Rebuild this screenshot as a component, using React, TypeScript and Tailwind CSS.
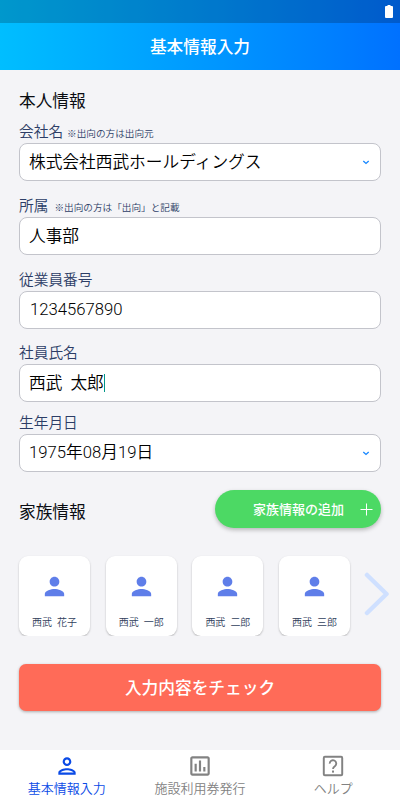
import { useState } from "react";
import type { ReactNode } from "react";
import { MdAssessment, MdOutlineAssessment, MdOutlinePerson, MdPerson } from "react-icons/md";

type FieldProps = {
  label: string;
  note?: string;
  noteClass?: string;
  className?: string;
  children: ReactNode;
};

const family = ["花子", "一郎", "二郎", "三郎"];

function Field({ label, note, noteClass = "ml-1", className = "", children }: FieldProps) {
  return (
    <div className={className}>
      <div className="flex h-[22px] items-baseline whitespace-nowrap text-[#2c3d66]">
        <span className="text-[14.7px] leading-[22px] font-[350]">{label}</span>
        {note && <span className={`text-[9.65px] leading-none font-[350] ${noteClass}`}>{note}</span>}
      </div>
      <div className="flex h-[38px] items-center justify-between rounded-[8px] border border-[#c3c4cb] bg-white pr-[10px] pl-[9px] text-[16.7px] font-[350] whitespace-nowrap text-black">
        {children}
      </div>
    </div>
  );
}

function SelectArrow() {
  return (
    <svg className="h-[6px] w-[8px]" viewBox="0 0 8 6" fill="none">
      <path d="M1.3 1.9L4 4.4L6.7 1.9" stroke="#1687ff" strokeWidth="1.3" />
    </svg>
  );
}

function FamilyCard({ name }: { name: string }) {
  return (
    <div className="flex h-[80px] w-[71px] shrink-0 flex-col items-center rounded-[9px] bg-white pt-[16px] shadow-[0_1px_2px_rgba(0,0,0,0.25)]">
      <MdPerson className="h-[29px] w-[29px] text-[#5f7ee9]" />
      <div className="mt-[14px] flex gap-[5px] text-[10px] leading-[15px] font-[350] text-[#30405c]">
        <span>西武</span>
        <span>{name}</span>
      </div>
    </div>
  );
}

function HelpIcon() {
  return (
    <svg className="h-[26px] w-[26px]" viewBox="0 0 24 24" fill="none" stroke="currentColor">
      <rect x="3.5" y="3.5" width="17" height="17" rx="1" strokeWidth="1.8" />
      <path d="M9 9.8a3 3 0 1 1 4.900 2.200c-1.100 .8-1.900 1.400-1.900 2.700" strokeWidth="1.700" />
      <path d="M12 16.200v1.900" strokeWidth="1.900" />
    </svg>
  );
}

export default function App() {
  const [tab, setTab] = useState("info");

  const tabs = [
    { id: "info", label: "基本情報入力", icon: <MdOutlinePerson className="h-[26px] w-[26px]" /> },
    {
      id: "ticket",
      label: "施設利用券発行",
      icon:
        tab === "ticket" ? (
          <MdAssessment className="h-[26px] w-[26px]" />
        ) : (
          <MdOutlineAssessment className="h-[26px] w-[26px]" />
        ),
    },
    { id: "help", label: "ヘルプ", icon: <HelpIcon /> },
  ];

  return (
    <div className="flex h-[800px] w-[400px] flex-col overflow-hidden bg-[#f4f4f7] font-[Roboto,'Noto_Sans_CJK_JP',sans-serif]">
      <header className="h-[70px] shrink-0 bg-linear-to-r from-[#00beff] to-[#0071ff] text-white">
        <div className="flex h-[23px] justify-end bg-black/20 pt-[5px] pr-[7px]">
          <svg className="h-[13px] w-[8px]" viewBox="0 0 8 13" fill="#fff">
            <path d="M2.500 0h3v1h1.500q1 0 1 1v10q0 1-1 1h-6q-1 0-1-1v-10q0-1 1-1h1.500z" />
          </svg>
        </div>
        <h1 className="flex h-[47px] items-center justify-center pt-[2px] text-[16.7px] font-medium">基本情報入力</h1>
      </header>

      <main className="flex-1 px-[19px] pt-[20px]">
        <h2 className="text-[16.7px] leading-[24px] text-[#0a0c12]">本人情報</h2>

        <Field label="会社名" note="※出向の方は出向元" className="mt-[7px]">
          <span className="pt-[2px]">株式会社西武ホールディングス</span>
          <SelectArrow />
        </Field>
        <Field label="所属" note="※出向の方は「出向」と記載" noteClass="ml-[6px]" className="mt-[14px]">
          <span className="pt-[2px]">人事部</span>
        </Field>
        <Field label="従業員番号" className="mt-[14px]">
          <span className="pl-px">1234567890</span>
        </Field>
        <Field label="社員氏名" className="mt-[13px]">
          <div className="flex items-center">
            <span className="pt-[2px]">西武</span>
            <span className="ml-[8px] pt-[2px]">太郎</span>
            <span className="h-[18px] w-[1.5px] bg-[#009688]" />
          </div>
        </Field>
        <Field label="生年月日" className="mt-[10px]">
          <span>1975年08月19日</span>
          <SelectArrow />
        </Field>

        <div className="mt-[18px] flex h-[38px] items-center justify-between">
          <h2 className="pt-[7px] text-[16.7px] text-[#0a0c12]">家族情報</h2>
          <button className="flex h-[38px] w-[166px] items-center justify-end rounded-full bg-[#4cd964] pr-[8px] text-white shadow-[0_2px_4px_rgba(0,0,0,0.25)]">
            <span className="pt-[2px] text-[13px] font-medium">家族情報の追加</span>
            <svg className="ml-[16px] h-[13px] w-[13px]" viewBox="0 0 13 13" stroke="#fff">
              <path d="M6.500 0.500v12M0.500 6.500h12" />
            </svg>
          </button>
        </div>

        <div className="-mr-[8px] -ml-[3px] mt-[24px] flex h-[84px] items-start gap-[15.700px] overflow-hidden pt-[4px] pl-[3px]">
          {family.map((name) => (
            <FamilyCard key={name} name={name} />
          ))}
          <svg className="mt-[14px] -ml-[2px] h-[48px] w-[27px] shrink-0" viewBox="0 0 27 48" fill="none">
            <path d="M3 5L22.500 24L3 43" stroke="#cfe0ff" strokeWidth="4.500" strokeLinecap="round" strokeLinejoin="round" />
          </svg>
        </div>

        <button className="mt-[28px] h-[47px] w-full rounded-[7px] bg-[#ff6b58] pt-[2px] text-[16.7px] font-medium text-white shadow-[0_1px_3px_rgba(0,0,0,0.3)]">
          入力内容をチェック
        </button>
      </main>

      <nav className="grid h-[50px] shrink-0 grid-cols-3 bg-white">
        {tabs.map((t) => (
          <button
            key={t.id}
            onClick={() => setTab(t.id)}
            className={`flex flex-col items-center pt-[3px] text-[13px] leading-[20px] font-[350] ${
              tab === t.id ? "text-[#0a4ae6]" : "text-[#828282]"
            }`}
          >
            {t.icon}
            <span>{t.label}</span>
          </button>
        ))}
      </nav>
    </div>
  );
}
